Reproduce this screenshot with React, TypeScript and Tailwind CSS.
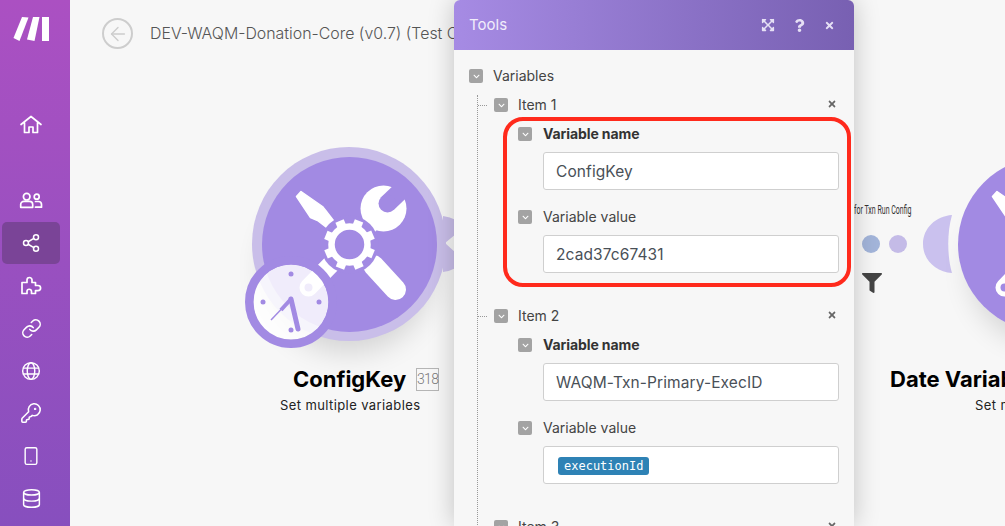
import {
  ArrowLeft,
  Database,
  KeyRound,
  Link,
  Share2,
  Smartphone,
} from "lucide-react";
import {
  FaChevronDown,
  FaExpandArrowsAlt,
  FaFilter,
  FaQuestion,
  FaTimes,
} from "react-icons/fa";

const PURPLE = "#a28ae3";

const Logo = () => (
  <svg width="37" height="26" viewBox="0 0 37 26" fill="white">
    <path d="M0.5 22 L9 1 L15.5 1.5 L6.5 25 Z" />
    <path d="M14 23.5 L20 1 L26.5 1 L21.5 25 Z" />
    <path d="M29 1 L36 1 L36 25 L29 25 Z" />
  </svg>
);

type GlyphProps = { size?: number };

const Glyph = ({ size = 24, children }: GlyphProps & { children: React.ReactNode }) => (
  <svg
    width={size}
    height={size}
    viewBox="0 0 24 24"
    fill="none"
    stroke="currentColor"
    strokeWidth="1.7"
    strokeLinejoin="round"
    strokeLinecap="round"
  >
    {children}
  </svg>
);

const HomeIcon = () => (
  <Glyph>
    <path d="M2 11.5 L12 3.5 L22 11.5 M5.5 9.5 V19.5 H10 V14 H14 V19.5 H18.5 V9.5" />
  </Glyph>
);

const TeamIcon = () => (
  <Glyph>
    <circle cx="7.7" cy="8.7" r="3.3" />
    <path d="M1.7 19.3 V16.5 A3.2 3.2 0 0 1 4.9 13.3 H10.5 A3.2 3.2 0 0 1 13.7 16.5 V19.3 Z" />
    <circle cx="17.7" cy="8.7" r="2.5" />
    <path d="M16.5 13.5 H19.5 A3 3 0 0 1 22.5 16.5 V19.2 H16.5" />
  </Glyph>
);

const PuzzleIcon = () => (
  <Glyph>
    <path d="M3 20.5 V9.5 H8 V7 A2.5 2.5 0 0 1 13 7 V9.5 H16.5 V12.5 H19 A2.6 2.6 0 0 1 19 17.7 H16.5 V20.5 H12.5 V18.5 A2.2 2.2 0 0 0 8 18.5 V20.5 Z" />
  </Glyph>
);

const GlobeIcon = () => (
  <Glyph size={20}>
    <circle cx="12" cy="12" r="10" />
    <ellipse cx="12" cy="12" rx="4.5" ry="10" />
    <path d="M2.8 8.5 H21.2 M2.8 15.5 H21.2" />
  </Glyph>
);

const navItems = [
  <TeamIcon key="team" />,
  <Share2 key="share" size={20} strokeWidth={1.8} />,
  <PuzzleIcon key="puzzle" />,
  <Link key="link" size={21} strokeWidth={1.8} />,
  <GlobeIcon key="globe" />,
  <KeyRound key="key" size={22} strokeWidth={1.7} />,
  <Smartphone key="phone" size={20} strokeWidth={1.7} />,
  <Database key="db" size={21} strokeWidth={1.7} />,
];

const Sidebar = () => (
  <aside className="flex h-[526px] w-[70px] shrink-0 flex-col bg-gradient-to-b from-[#ab50c2] to-[#874fbe] text-white">
    <div className="h-[104px] pl-[13px] pt-[16px]">
      <Logo />
    </div>
    <div className="flex h-[42px] w-[62px] items-center justify-center">
      <HomeIcon />
    </div>
    <div className="mt-[33px] flex w-full flex-col pl-[2px] pr-[10px]">
      {navItems.map((icon, i) => (
        <div
          key={i}
          className={
            i === 1
              ? "flex h-[42.6px] items-center justify-center rounded-[5px] bg-[#7a4497]"
              : "flex h-[42.6px] items-center justify-center"
          }
        >
          {icon}
        </div>
      ))}
    </div>
  </aside>
);

const ToolsGlyph = () => (
  <svg viewBox="-87.5 -87.5 175 175" className="h-full w-full">
    <circle r="87.5" fill={PURPLE} />
    {/* screwdriver */}
    <path d="M-53 -48 L-48.5 -53 L-27 -38 L-23 -33 L-13 -20 L-19 -14 L-32 -24 L-39 -27 Z" fill="white" strokeLinejoin="round" stroke="white" strokeWidth="1.5" />
    <path d="M24 21 L46 45" stroke="white" strokeWidth="21" strokeLinecap="round" />
    {/* wrench */}
    <path d="M-41 43 L24 -24" stroke="white" strokeWidth="18" strokeLinecap="round" />
    <circle cx="34" cy="-36" r="23" fill="white" />
    <path d="M38 -41 L60 -62" stroke={PURPLE} strokeWidth="18" />
    <circle cx="38" cy="-41" r="9" fill={PURPLE} />
    <circle cx="-41" cy="43" r="4" fill={PURPLE} />
    {/* gear */}
    <circle r="29" fill={PURPLE} />
    {[0, 45, 90, 135, 180, 225, 270, 315].map((a) => (
      <rect key={a} x="-4.5" y="-25.5" width="9" height="9" fill="white" transform={`rotate(${a + 22})`} />
    ))}
    <circle r="18" fill="none" stroke="white" strokeWidth="6.5" />
  </svg>
);

const ClockBadge = () => (
  <svg viewBox="-46 -46 92 92" className="h-full w-full">
    <circle r="37.5" fill="white" fillOpacity="0.84" />
    <circle r="41.7" fill="none" stroke={PURPLE} strokeWidth="8.6" />
    <circle cx="0" cy="-28" r="2.5" fill={PURPLE} />
    <circle cx="28" cy="0" r="2.5" fill={PURPLE} />
    <circle cx="0" cy="28" r="2.5" fill={PURPLE} />
    <circle cx="-28" cy="0" r="2.5" fill={PURPLE} />
    <path d="M0 -3 L7 27" stroke={PURPLE} strokeWidth="5" strokeLinecap="round" />
    <path d="M0 -3 L-20 18" stroke={PURPLE} strokeWidth="1.5" />
    <path d="M0 -3 L-10 8" stroke={PURPLE} strokeWidth="4" />
  </svg>
);

const Canvas = () => (
  <main className="relative h-[526px] flex-1 overflow-hidden bg-[#f7f7f7]">
    <div className="flex items-center gap-[17px] pl-[32px] pt-[18px]">
      <div className="flex h-[31px] w-[31px] shrink-0 items-center justify-center rounded-full border-2 border-[#cdcdcd] text-[#cdcdcd]">
        <ArrowLeft size={22} strokeWidth={1.5} />
      </div>
      <span className="w-[304px] overflow-hidden whitespace-nowrap text-[15.9px] font-light text-[#555]">
        DEV-WAQM-Donation-Core (v0.7) (Test Core)
      </span>
    </div>

    {/* ConfigKey node */}
    <div className="absolute left-[182px] top-[147px] h-[194px] w-[194px] rounded-full bg-[#c9bee9] shadow-[0_24px_28px_-12px_rgba(0,0,0,0.14)]">
      <div className="ml-[10px] mt-[10px] h-[175px] w-[175px]">
        <ToolsGlyph />
      </div>
    </div>
    <svg className="absolute left-[370px] top-[212px]" width="16" height="64" viewBox="0 0 16 64">
      <path d="M3 4 Q10 5 16 8 L16 22 L5 31 L16 41 L16 56 Q10 59 3 60 Z" fill="#c9bee9" />
    </svg>
    <div className="absolute left-[175px] top-[256px] h-[92px] w-[92px]">
      <ClockBadge />
    </div>
    <div className="absolute left-[223px] top-[367px] flex items-center">
      <span className="text-[22px] font-bold leading-[24px] text-black">ConfigKey</span>
      <span className="ml-[10px] flex h-[23px] w-[23px] items-center justify-center border border-[#b5b5b5] font-['Roboto',sans-serif] text-[14px] font-light tracking-[-0.6px] text-[#777]">
        318
      </span>
    </div>
    <div className="absolute left-[210px] top-[397px] whitespace-nowrap text-[13px] leading-[16px] tracking-[0.4px] text-[#222]">
      Set multiple variables
    </div>

    {/* link to the next node */}
    <div className="absolute left-[784px] top-[203px] origin-left scale-x-[0.54] whitespace-nowrap font-['Roboto',sans-serif] text-[13px] leading-[14px] text-[#333]">
      for Txn Run Config
    </div>
    <div className="absolute left-[792px] top-[235px] flex gap-[9px]">
      <div className="h-[18px] w-[18px] rounded-full bg-[#a3b5da]" />
      <div className="h-[18px] w-[18px] rounded-full bg-[#c4bbe7]" />
    </div>
    <FaFilter className="absolute left-[792px] top-[273px] text-[#444]" size={20} />
    <svg className="absolute left-[852px] top-[214px]" width="32" height="60" viewBox="0 0 32 60">
      <path d="M30 1 C14 2 1 14 1 30 C1 46 14 58 30 59 C25 42 25 18 30 1 Z" fill="#cac1ee" />
    </svg>

    {/* Date Variables node */}
    <div className="absolute left-[888px] top-[157px] h-[175px] w-[175px] rounded-full shadow-[0_24px_28px_-12px_rgba(0,0,0,0.14)]">
      <ToolsGlyph />
    </div>
    <div className="absolute left-[820px] top-[367px] whitespace-nowrap text-[22px] font-bold leading-[24px] text-black">
      Date Variables
    </div>
    <div className="absolute left-[905px] top-[397px] whitespace-nowrap text-[13px] leading-[16px] tracking-[0.4px] text-[#222]">
      Set multiple variables
    </div>
  </main>
);

const Toggle = () => (
  <span className="flex h-[14px] w-[14px] shrink-0 items-center justify-center rounded-[2px] bg-[#a3a3a3] text-white">
    <FaChevronDown size={7} />
  </span>
);

const Field = ({ label, bold, children }: { label: string; bold?: boolean; children: React.ReactNode }) => (
  <div className="flex flex-col">
    <div className="flex h-[14px] items-center gap-[11px]">
      <Toggle />
      <span className={bold ? "-mt-px text-[14px] font-bold tracking-[-0.1px] text-[#333]" : "-mt-px text-[14px] text-[#444]"}>
        {label}
      </span>
    </div>
    <div className="ml-[25px] mt-[11px] flex h-[38px] items-center rounded-[3px] border border-[#cfcfcf] bg-white pl-[12px] pt-px text-[15.5px] tracking-[0.1px] text-[#495057]">
      {children}
    </div>
  </div>
);

const Item = ({ label, name, value }: { label: string; name: string; value: React.ReactNode }) => (
  <div className="relative flex flex-col">
    <div className="absolute left-[-16px] top-[7px] w-[9px] border-t border-dotted border-[#999]" />
    <div className="flex h-[14px] items-center">
      <Toggle />
      <span className="-mt-px ml-[10px] flex-1 text-[14px] text-[#444]">{label}</span>
      <FaTimes size={10} className="mr-[2px] mt-[-2px] text-[#666]" />
    </div>
    <div className="ml-[24px] mt-[15px] flex flex-col gap-[20px]">
      <Field label="Variable name" bold>
        {name}
      </Field>
      <Field label="Variable value">{value}</Field>
    </div>
  </div>
);

const ToolsPanel = () => (
  <section className="absolute left-[454px] top-0 h-[526px] w-[400px] overflow-hidden rounded-t-[6px] bg-[#f7f7f7] shadow-[0_0_26px_rgba(0,0,0,0.22)]">
    <header className="flex h-[50px] items-center bg-gradient-to-r from-[#a68be4] to-[#7860b2] pl-[15px] pr-[19px] text-white">
      <span className="flex-1 pt-px text-[15px] text-[#f1edfb]">Tools</span>
      <div className="flex items-center gap-[18px] text-[#e6e0f5]">
        <FaExpandArrowsAlt size={14} />
        <FaQuestion size={13} />
        <FaTimes size={11} />
      </div>
    </header>
    <div className="pl-[15px] pr-[15px] pt-[19px]">
      <div className="flex h-[14px] items-center gap-[10px]">
        <Toggle />
        <span className="-mt-px text-[14px] text-[#444]">Variables</span>
      </div>
      <div className="ml-[8px] mt-[12px] border-l border-dotted border-[#999] pl-[16px] pt-[3px]">
        <div className="flex flex-col gap-[36px] pb-[20px]">
          <Item label="Item 1" name="ConfigKey" value="2cad37c67431" />
          <Item
            label="Item 2"
            name="WAQM-Txn-Primary-ExecID"
            value={
              <span className="ml-[2px] flex h-[18px] items-center rounded-[3px] bg-[#2e82b5] px-[6px] font-['DejaVu_Sans_Mono',monospace] text-[12px] tracking-normal text-white">
                executionId
              </span>
            }
          />
          <Item label="Item 3" name="" value="" />
        </div>
      </div>
    </div>
    {/* highlight drawn on top of the form */}
    <div className="absolute left-[49px] top-[117px] h-[170px] w-[348px] rounded-[20px] border-4 border-[#ff2a1c]" />
  </section>
);

export default function App() {
  return (
    <div className="relative flex h-[526px] w-[1005px] overflow-hidden font-['Inter',sans-serif]">
      <Sidebar />
      <Canvas />
      <ToolsPanel />
    </div>
  );
}
